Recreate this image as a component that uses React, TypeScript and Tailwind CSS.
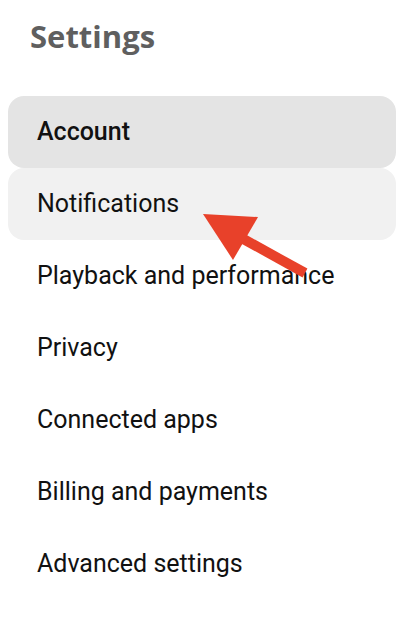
const ITEMS = [
  "Account",
  "Notifications",
  "Playback and performance",
  "Privacy",
  "Connected apps",
  "Billing and payments",
  "Advanced settings",
];

export default function App() {
  return (
    <div className="relative h-[624px] w-[418px] overflow-hidden bg-white">
      <h1 className="px-[30px] pt-[14px] font-['Open_Sans',sans-serif] text-[31px] font-bold leading-[44px] text-[#5f5f5f]">
        Settings
      </h1>
      <nav className="mt-[38px] flex flex-col pl-[8px] pr-[22px]">
        {ITEMS.map((label, i) => (
          <div
            key={label}
            className={
              "flex h-[72px] items-center rounded-[16px] pl-[29px] font-['Roboto',sans-serif] text-[25px] text-[#111] " +
              (i === 0
                ? "bg-[#e4e4e4] font-medium"
                : i === 1
                  ? "bg-[#f1f1f1]"
                  : "")
            }
          >
            {label}
          </div>
        ))}
      </nav>
      <svg
        className="pointer-events-none absolute left-0 top-0"
        width="418"
        height="624"
        viewBox="0 0 418 624"
      >
        <line
          x1="238"
          y1="236"
          x2="305"
          y2="273"
          stroke="#e8412a"
          strokeWidth="10"
        />
        <polygon points="203,214 258,217 233,260" fill="#e8412a" />
      </svg>
    </div>
  );
}
